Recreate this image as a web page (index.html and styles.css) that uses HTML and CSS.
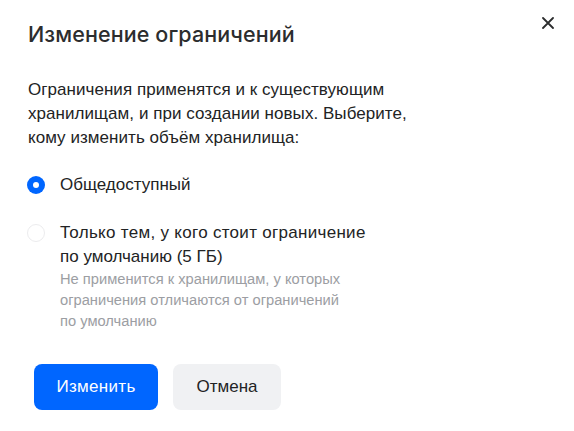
FILE: index.html
```html
<!DOCTYPE html>
<html lang="ru">
<head>
<meta charset="utf-8">
<link rel="stylesheet" href="styles.css">
</head>
<body>
<div class="dialog">
  <div class="header">
    <h1 class="title">Изменение ограничений</h1>
    <button class="close" aria-label="Закрыть">
      <svg width="12" height="12" viewBox="0 0 12 12"><path d="M1 1L11 11M11 1L1 11" stroke="#2c2d2e" stroke-width="1.8" stroke-linecap="round"/></svg>
    </button>
  </div>
  <p class="intro">Ограничения применятся и к существующим<br>хранилищам, и при создании новых. Выберите,<br>кому изменить объём хранилища:</p>
  <div class="options">
    <label class="option">
      <span class="radio checked"></span>
      <span class="label">Общедоступный</span>
    </label>
    <label class="option">
      <span class="radio"></span>
      <span class="label"><span class="wide">Только тем, у кого стоит ограничение</span><br>по умолчанию (5 ГБ)
        <span class="hint">Не применится к хранилищам, у которых<br>ограничения отличаются от ограничений<br>по умолчанию</span>
      </span>
    </label>
  </div>
  <div class="actions">
    <button class="btn primary">Изменить</button>
    <button class="btn secondary">Отмена</button>
  </div>
</div>
</body>
</html>
```

FILE: styles.css
```css
* { box-sizing: border-box; }
html, body { margin: 0; background: #fff; }
body {
  font-family: "Liberation Sans", Arial, sans-serif;
  color: #222324;
  width: 574px;
  height: 431px;
}
.dialog {
  padding: 20px 20px 0 28px;
}
.header {
  display: flex;
  justify-content: space-between;
  align-items: flex-start;
}
.title {
  margin: 0;
  font-family: Inter, "Noto Sans", sans-serif;
  font-size: 21.5px;
  font-weight: 500;
  line-height: 28px;
  color: #2c2d2e;
  letter-spacing: 0.1px;
}
.close {
  border: 0;
  background: none;
  padding: 0;
  width: 12px;
  height: 12px;
  margin-top: -3px;
  margin-right: 0;
  display: flex;
}
.intro {
  margin: 30px 0 0;
  font-size: 17px;
  line-height: 24px;
  white-space: nowrap;
  letter-spacing: 0.05px;
}
.options {
  margin-top: 23px;
  display: flex;
  flex-direction: column;
  gap: 24px;
}
.option {
  display: flex;
  align-items: flex-start;
  gap: 14px;
}
.radio {
  flex: none;
  width: 18px;
  height: 18px;
  margin-top: 3px;
  border-radius: 50%;
  border: 1.5px solid #ececee;
  background: #fff;
  position: relative;
  left: -1px;
}
.radio.checked {
  border: 0;
  background: #0066ff;
}
.radio.checked::after {
  content: "";
  position: absolute;
  left: 6px;
  top: 6px;
  width: 6px;
  height: 6px;
  border-radius: 50%;
  background: #fff;
}
.label {
  font-size: 17px;
  line-height: 24px;
  white-space: nowrap;
}
.wide {
  letter-spacing: 0.3px;
}
.hint {
  display: block;
  font-size: 14.7px;
  line-height: 21px;
  color: #9c9ea3;
  margin-top: 0;
}
.actions {
  margin-top: 32px;
  margin-left: 6px;
  display: flex;
  gap: 15px;
}
.btn {
  height: 46px;
  border: 0;
  border-radius: 8px;
  font-family: "Liberation Sans", Arial, sans-serif;
  font-size: 17px;
  padding: 0;
}
.primary {
  width: 124px;
  background: #0066ff;
  color: #fff;
  letter-spacing: 0.3px;
}
.secondary {
  width: 108px;
  background: #f0f1f3;
  color: #222324;
}
```
